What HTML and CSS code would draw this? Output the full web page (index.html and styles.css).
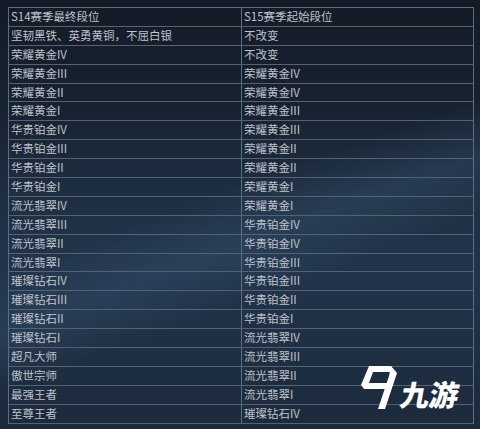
FILE: index.html
```html
<!DOCTYPE html>
<html lang="zh">
<head>
<meta charset="utf-8">
<link rel="stylesheet" href="styles.css">
</head>
<body>
<div class="page">
  <div class="grid">
    <div class="cell">S14赛季最终段位</div><div class="cell">S15赛季起始段位</div>
    <div class="cell">坚韧黑铁、英勇黄铜，不屈白银</div><div class="cell">不改变</div>
    <div class="cell">荣耀黄金IV</div><div class="cell">不改变</div>
    <div class="cell">荣耀黄金III</div><div class="cell">荣耀黄金IV</div>
    <div class="cell">荣耀黄金II</div><div class="cell">荣耀黄金IV</div>
    <div class="cell">荣耀黄金I</div><div class="cell">荣耀黄金III</div>
    <div class="cell">华贵铂金IV</div><div class="cell">荣耀黄金III</div>
    <div class="cell">华贵铂金III</div><div class="cell">荣耀黄金II</div>
    <div class="cell">华贵铂金II</div><div class="cell">荣耀黄金II</div>
    <div class="cell">华贵铂金I</div><div class="cell">荣耀黄金I</div>
    <div class="cell">流光翡翠IV</div><div class="cell">荣耀黄金I</div>
    <div class="cell">流光翡翠III</div><div class="cell">华贵铂金IV</div>
    <div class="cell">流光翡翠II</div><div class="cell">华贵铂金IV</div>
    <div class="cell">流光翡翠I</div><div class="cell">华贵铂金III</div>
    <div class="cell">璀璨钻石IV</div><div class="cell">华贵铂金III</div>
    <div class="cell">璀璨钻石III</div><div class="cell">华贵铂金II</div>
    <div class="cell">璀璨钻石II</div><div class="cell">华贵铂金I</div>
    <div class="cell">璀璨钻石I</div><div class="cell">流光翡翠IV</div>
    <div class="cell">超凡大师</div><div class="cell">流光翡翠III</div>
    <div class="cell">傲世宗师</div><div class="cell">流光翡翠II</div>
    <div class="cell">最强王者</div><div class="cell">流光翡翠I</div>
    <div class="cell">至尊王者</div><div class="cell">璀璨钻石IV</div>
  </div>
  <div class="logo">
    <svg class="logo-icon" width="36" height="44" viewBox="0 0 36 44">
      <polygon points="8,0 30,0 33,6 12,6 8,17 27,17 24,23 3,23 0,19" fill="#ffffff"/>
      <polygon points="30,0 36,7 24,43 17,43 28,10" fill="#ffffff"/>
    </svg>
    <span class="logo-text">九游</span>
  </div>
</div>
</body>
</html>
```

FILE: styles.css
```css
html, body {
  margin: 0;
  padding: 0;
}
body {
  width: 480px;
  height: 429px;
  overflow: hidden;
  background-color: #18222f;
  background-image:
    linear-gradient(160deg, rgba(70,110,150,0) 45%, rgba(90,130,170,0.16) 55%, rgba(70,110,150,0) 65%),
    linear-gradient(180deg, #141b26 0%, #172231 25%, #1e2f42 45%, #21344a 62%, #1f3044 80%, #1b2a3b 100%);
  font-family: "Noto Sans CJK SC", "Noto Sans", sans-serif;
}
.page {
  position: relative;
  width: 480px;
  height: 429px;
  padding: 7px 0 0 8px;
  box-sizing: border-box;
}
.grid {
  display: grid;
  grid-template-columns: 233px 232px;
  grid-auto-rows: 18.9px;
  width: 466px;
  border-top: 1px solid #5f6d7d;
  border-left: 1px solid #5f6d7d;
  box-sizing: border-box;
}
.cell {
  box-sizing: border-box;
  border-right: 1px solid #5f6d7d;
  border-bottom: 1px solid #55626f;
  padding-left: 2px;
  font-size: 11.5px;
  line-height: 17.9px;
  color: #bfc3c9;
  white-space: nowrap;
  overflow: hidden;
}
.logo {
  position: absolute;
  left: 361px;
  top: 366px;
  display: flex;
  align-items: flex-end;
  gap: 4px;
}
.logo-icon {
  display: block;
}
.logo-text {
  font-family: "Noto Sans CJK SC", sans-serif;
  font-weight: 900;
  font-size: 29px;
  line-height: 32px;
  color: #ffffff;
  transform: skewX(-10deg);
  margin-bottom: 1px;
}
```
